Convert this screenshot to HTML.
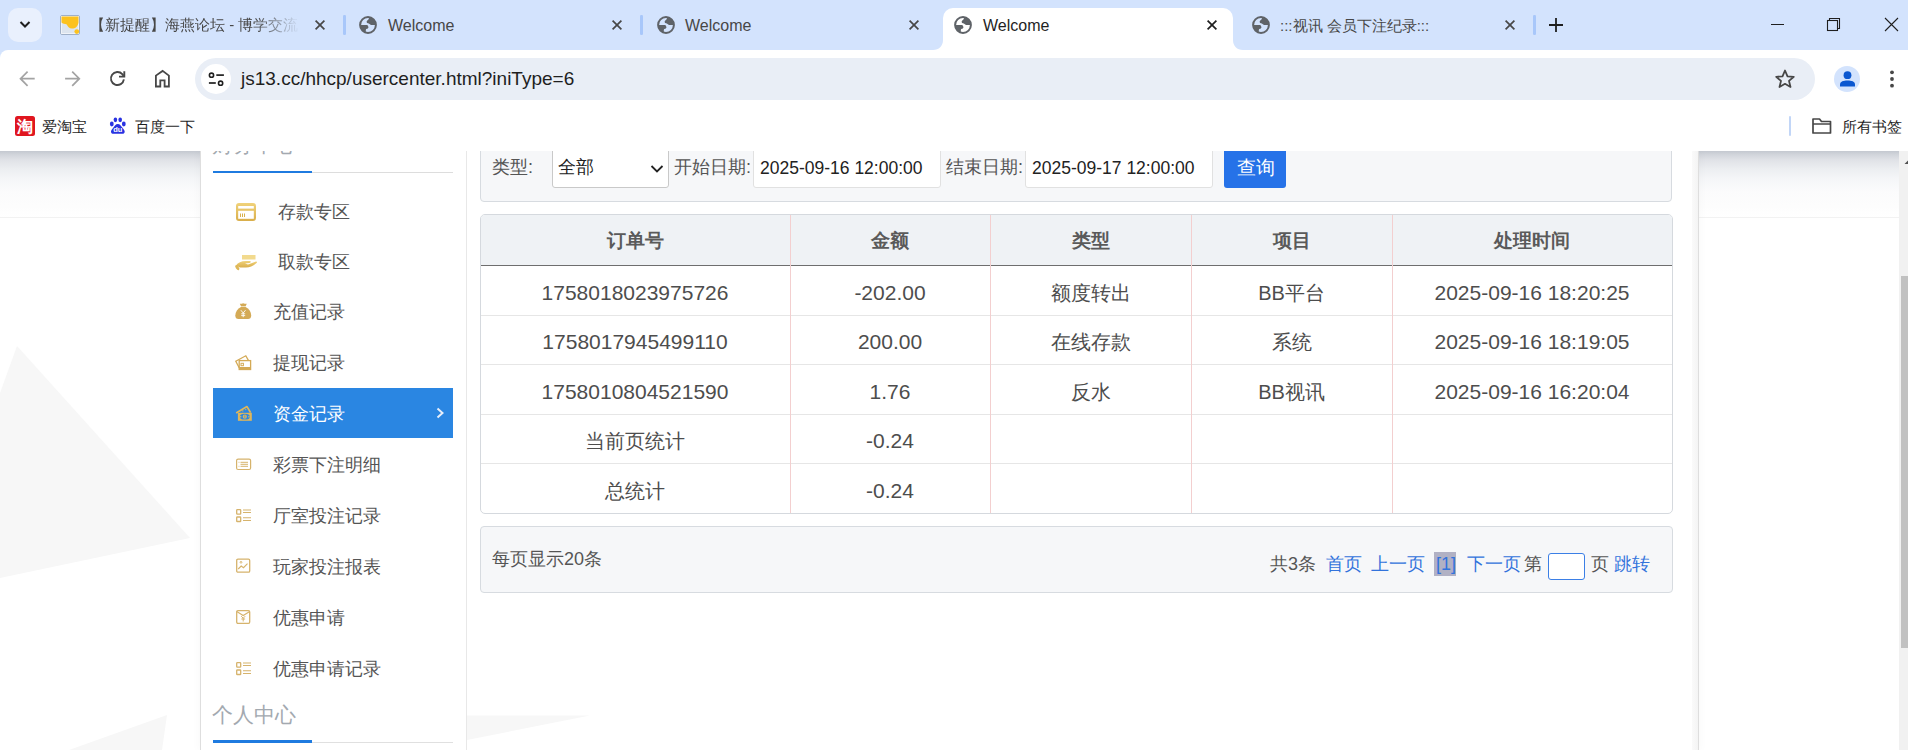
<!DOCTYPE html>
<html><head><meta charset="utf-8">
<style>
*{margin:0;padding:0;box-sizing:border-box}
html,body{width:1908px;height:750px;overflow:hidden;background:#fff;font-family:"Liberation Sans",sans-serif}
.abs{position:absolute}
#tabbar{position:absolute;left:0;top:0;width:1908px;height:58px;background:#d3e3fd}
#toolbar{position:absolute;left:0;top:50px;width:1908px;height:101px;background:#fff;border-top-left-radius:8px}
#page{position:absolute;left:0;top:151px;width:1908px;height:599px;background:#fff;overflow:hidden}
.tabt{position:absolute;top:17px;font-size:15px;color:#474747;white-space:nowrap;line-height:18px}
.sep{position:absolute;top:15px;width:2.5px;height:20px;background:#a8c7fa;border-radius:1.25px}
</style></head><body>
<div id="tabbar"><div class="abs" style="left:8px;top:8px;width:34px;height:34px;border-radius:10px;background:#e9f0fd"></div><svg class="abs" style="left:19px;top:20px" width="12" height="10"><path d="M1.5,2 L6,6.5 L10.5,2" stroke="#1f1f1f" stroke-width="2" fill="none"/></svg><svg class="abs" style="left:60px;top:15px" width="20" height="20"><rect x="0.5" y="0.5" width="19" height="19" rx="1.5" fill="#dde5ef" stroke="#9fb0c8" stroke-width="1"/><rect x="1.5" y="1.5" width="17" height="17" fill="none" stroke="#f4f7fb" stroke-width="0.8"/><path d="M1.5,1.5 L18.5,1.5 L18.5,7.4 C18,11 15.5,13.6 12,13.6 C9,13.6 7.8,11.5 6.8,9.6 C5,9 2.5,8.6 1.5,7.6 Z" fill="#fcc21f"/><circle cx="16.8" cy="16.6" r="2.4" fill="#fcc21f"/></svg><div class="tabt" style="top:16px;left:90px;width:212px;overflow:hidden;-webkit-mask-image:linear-gradient(90deg,#000 165px,transparent 210px)">【新提醒】海燕论坛 - 博学交流</div><svg class="abs" style="left:314px;top:19px" width="12" height="12"><path d="M1.6,1.6 L10.4,10.4 M10.4,1.6 L1.6,10.4" stroke="#474747" stroke-width="1.7"/></svg><div class="sep" style="left:343px"></div><svg class="abs" style="left:359px;top:16px" width="18" height="18" viewBox="0 0 18 18"><defs><clipPath id="gc"><circle cx="9" cy="9" r="8"/></clipPath></defs><circle cx="9" cy="9" r="7.9" fill="none" stroke="#5f6368" stroke-width="2"/><g clip-path="url(#gc)" fill="#5f6368"><path d="M9.8,0 L10,2.1 C9.8,3.5 8.8,4.2 8,4.8 C7.5,5.5 7.6,6.5 8.2,6.9 C9.2,7.3 10.6,7.5 11.2,8.4 C11.6,9 13,9.2 15.6,9.1 L18,8.8 L18,0 Z"/><path d="M0,9.1 L8.2,9.1 C8.9,9.6 9.4,10.6 9.4,11.5 C9.4,12.4 8.6,12.8 7.2,13 C6.8,13.4 6.8,14.5 6.8,15.6 L6.8,18 L0,18 Z"/></g></svg><div class="tabt" style="left:388px;font-size:16px">Welcome</div><svg class="abs" style="left:611px;top:19px" width="12" height="12"><path d="M1.6,1.6 L10.4,10.4 M10.4,1.6 L1.6,10.4" stroke="#474747" stroke-width="1.7"/></svg><div class="sep" style="left:640px"></div><svg class="abs" style="left:657px;top:16px" width="18" height="18" viewBox="0 0 18 18"><defs><clipPath id="gc"><circle cx="9" cy="9" r="8"/></clipPath></defs><circle cx="9" cy="9" r="7.9" fill="none" stroke="#5f6368" stroke-width="2"/><g clip-path="url(#gc)" fill="#5f6368"><path d="M9.8,0 L10,2.1 C9.8,3.5 8.8,4.2 8,4.8 C7.5,5.5 7.6,6.5 8.2,6.9 C9.2,7.3 10.6,7.5 11.2,8.4 C11.6,9 13,9.2 15.6,9.1 L18,8.8 L18,0 Z"/><path d="M0,9.1 L8.2,9.1 C8.9,9.6 9.4,10.6 9.4,11.5 C9.4,12.4 8.6,12.8 7.2,13 C6.8,13.4 6.8,14.5 6.8,15.6 L6.8,18 L0,18 Z"/></g></svg><div class="tabt" style="left:685px;font-size:16px">Welcome</div><svg class="abs" style="left:908px;top:19px" width="12" height="12"><path d="M1.6,1.6 L10.4,10.4 M10.4,1.6 L1.6,10.4" stroke="#474747" stroke-width="1.7"/></svg><div class="abs" style="left:943px;top:8px;width:290px;height:42px;background:#fff;border-radius:10px 10px 0 0"></div><svg class="abs" style="left:933px;top:40px" width="10" height="10"><path d="M0,10 C6,10 10,6 10,0 L10,10 Z" fill="#fff"/></svg><svg class="abs" style="left:1233px;top:40px" width="10" height="10"><path d="M10,10 C4,10 0,6 0,0 L0,10 Z" fill="#fff"/></svg><svg class="abs" style="left:954px;top:16px" width="18" height="18" viewBox="0 0 18 18"><defs><clipPath id="gc"><circle cx="9" cy="9" r="8"/></clipPath></defs><circle cx="9" cy="9" r="7.9" fill="none" stroke="#5f6368" stroke-width="2"/><g clip-path="url(#gc)" fill="#5f6368"><path d="M9.8,0 L10,2.1 C9.8,3.5 8.8,4.2 8,4.8 C7.5,5.5 7.6,6.5 8.2,6.9 C9.2,7.3 10.6,7.5 11.2,8.4 C11.6,9 13,9.2 15.6,9.1 L18,8.8 L18,0 Z"/><path d="M0,9.1 L8.2,9.1 C8.9,9.6 9.4,10.6 9.4,11.5 C9.4,12.4 8.6,12.8 7.2,13 C6.8,13.4 6.8,14.5 6.8,15.6 L6.8,18 L0,18 Z"/></g></svg><div class="tabt" style="left:983px;color:#1f1f1f;font-size:16px">Welcome</div><svg class="abs" style="left:1206px;top:19px" width="12" height="12"><path d="M1.6,1.6 L10.4,10.4 M10.4,1.6 L1.6,10.4" stroke="#1f1f1f" stroke-width="1.7"/></svg><svg class="abs" style="left:1252px;top:16px" width="18" height="18" viewBox="0 0 18 18"><defs><clipPath id="gc"><circle cx="9" cy="9" r="8"/></clipPath></defs><circle cx="9" cy="9" r="7.9" fill="none" stroke="#5f6368" stroke-width="2"/><g clip-path="url(#gc)" fill="#5f6368"><path d="M9.8,0 L10,2.1 C9.8,3.5 8.8,4.2 8,4.8 C7.5,5.5 7.6,6.5 8.2,6.9 C9.2,7.3 10.6,7.5 11.2,8.4 C11.6,9 13,9.2 15.6,9.1 L18,8.8 L18,0 Z"/><path d="M0,9.1 L8.2,9.1 C8.9,9.6 9.4,10.6 9.4,11.5 C9.4,12.4 8.6,12.8 7.2,13 C6.8,13.4 6.8,14.5 6.8,15.6 L6.8,18 L0,18 Z"/></g></svg><div class="tabt" style="left:1280px">:::视讯 会员下注纪录:::</div><svg class="abs" style="left:1504px;top:19px" width="12" height="12"><path d="M1.6,1.6 L10.4,10.4 M10.4,1.6 L1.6,10.4" stroke="#474747" stroke-width="1.7"/></svg><div class="sep" style="left:1533px"></div><svg class="abs" style="left:1548px;top:17px" width="16" height="16"><path d="M8,1 L8,15 M1,8 L15,8" stroke="#1f1f1f" stroke-width="1.8"/></svg><div class="abs" style="left:1771px;top:24px;width:13px;height:1px;background:#1f1f1f"></div><svg class="abs" style="left:1825px;top:16px" width="17" height="17"><rect x="2.5" y="4.5" width="10" height="10" fill="none" stroke="#1f1f1f" stroke-width="1.1"/><path d="M4.5,4.5 L4.5,2.5 L14.5,2.5 L14.5,12.5 L12.5,12.5" fill="none" stroke="#1f1f1f" stroke-width="1.1"/></svg><svg class="abs" style="left:1884px;top:17px" width="15" height="15"><path d="M1,1 L14,14 M14,1 L1,14" stroke="#1f1f1f" stroke-width="1.1"/></svg></div>
<div id="toolbar"><svg class="abs" style="left:17px;top:19px" width="20" height="20"><path d="M17.7,9.7 L3.6,9.7 M10.6,2.6 L3.5,9.7 L10.6,16.8" stroke="#a3a3a3" stroke-width="1.7" fill="none"/></svg><svg class="abs" style="left:62px;top:19px" width="20" height="20"><path d="M3.1,9.7 L17.2,9.7 M10.2,2.6 L17.3,9.7 L10.2,16.8" stroke="#a3a3a3" stroke-width="1.7" fill="none"/></svg><svg class="abs" style="left:107px;top:19px" width="20" height="20"><path d="M16.89,10.40 A6.5,6.5 0 1 1 15.28,5.15 L16.6,6.9" stroke="#474747" stroke-width="1.9" fill="none"/><path d="M12,7.6 L17.3,7.6 L17.3,2.2" stroke="#474747" stroke-width="1.9" fill="none"/></svg><svg class="abs" style="left:152px;top:19px" width="20" height="20"><path d="M3.9,17.5 L3.9,6.6 L10.6,1.9 L16.9,6.6 L16.9,17.5 L12.6,17.5 L12.6,11.4 L8.3,11.4 L8.3,17.5 Z" stroke="#474747" stroke-width="1.8" fill="none" stroke-linejoin="miter"/></svg><div class="abs" style="left:195px;top:8px;width:1620px;height:42px;border-radius:21px;background:#e9eef6"></div><div class="abs" style="left:201px;top:14px;width:30px;height:30px;border-radius:15px;background:#fff"></div><svg class="abs" style="left:207px;top:20px" width="20" height="18"><circle cx="4.5" cy="5.2" r="2.1" fill="none" stroke="#1f1f1f" stroke-width="1.6"/><path d="M9.3,5.1 L16.9,5.1" stroke="#1f1f1f" stroke-width="1.7"/><path d="M1.9,13 L8.8,13" stroke="#1f1f1f" stroke-width="1.7"/><circle cx="13.6" cy="13.2" r="2.1" fill="none" stroke="#1f1f1f" stroke-width="1.6"/></svg><div class="abs" style="left:241px;top:17px;font-size:19px;color:#1f1f1f;line-height:24px;white-space:nowrap">js13.cc/hhcp/usercenter.html?iniType=6</div><svg class="abs" style="left:1774px;top:18px" width="22" height="22"><path d="M11,2.5 L13.5,8.3 L19.8,8.8 L15,12.9 L16.5,19 L11,15.8 L5.5,19 L7,12.9 L2.2,8.8 L8.5,8.3 Z" fill="none" stroke="#474747" stroke-width="1.8" stroke-linejoin="round"/></svg><div class="abs" style="left:1834px;top:16px;width:26px;height:26px;border-radius:13px;background:#d3e3fd"></div><svg class="abs" style="left:1837px;top:19px" width="20" height="20"><circle cx="10.5" cy="6.2" r="3.9" fill="#0b57d0"/><path d="M3,17.5 L3,15.5 C3,12.6 6.5,11.6 10.5,11.6 C14.5,11.6 18,12.6 18,15.5 L18,17.5 Z" fill="#0b57d0"/></svg><svg class="abs" style="left:1887px;top:19px" width="10" height="20"><circle cx="5" cy="3.3" r="1.9" fill="#474747"/><circle cx="5" cy="10" r="1.9" fill="#474747"/><circle cx="5" cy="16.7" r="1.9" fill="#474747"/></svg><svg class="abs" style="left:15px;top:66px" width="20" height="20"><rect x="0" y="0" width="20" height="20" rx="2.5" fill="#e0161f"/><text x="10" y="16" font-size="16" text-anchor="middle" fill="#fff" font-weight="bold">淘</text></svg><div class="abs" style="left:42px;top:67px;font-size:15px;color:#1f1f1f;line-height:20px">爱淘宝</div><svg class="abs" style="left:106px;top:65px" width="22" height="22"><g fill="#2932e1"><ellipse cx="5.8" cy="9" rx="1.9" ry="2.4"/><ellipse cx="9.4" cy="4.8" rx="1.8" ry="2.4"/><ellipse cx="14.2" cy="4.8" rx="1.8" ry="2.4"/><ellipse cx="17.8" cy="9" rx="1.9" ry="2.4"/><path d="M11.8,9 C9.6,9 8.6,11 7.2,12.8 C5.8,14.6 4.9,15.6 5,17 C5.2,18.6 6.6,19 8.2,18.8 L15.4,18.8 C17,19 18.5,18.6 18.7,17 C18.8,15.6 17.9,14.6 16.5,12.8 C15,11 14,9 11.8,9 Z"/></g><text x="11.8" y="17.4" font-size="7.5" text-anchor="middle" fill="#fff" font-weight="bold" font-family="Liberation Sans">du</text></svg><div class="abs" style="left:135px;top:67px;font-size:15px;color:#1f1f1f;line-height:20px">百度一下</div><div class="abs" style="left:1789px;top:66px;width:2px;height:20px;background:#c2d6f7;border-radius:1px"></div><svg class="abs" style="left:1811px;top:66px" width="22" height="20"><path d="M2,3 L8.5,3 L10.5,5.5 L19.5,5.5 L19.5,17 L2,17 Z" fill="none" stroke="#474747" stroke-width="1.7" stroke-linejoin="round"/><path d="M2,8 L19.5,8" stroke="#474747" stroke-width="1.5"/></svg><div class="abs" style="left:1842px;top:67px;font-size:15px;color:#1f1f1f;line-height:20px;white-space:nowrap">所有书签</div></div>
<div id="page">
<svg class="abs" style="left:0;top:0" width="1908" height="599">
 <polygon points="17,195 190,387 0,427 0,242" fill="#f7f7f7"/>
 <polygon points="167,564 162,599 69,599" fill="#f7f7f7"/>
</svg>
<div class="abs" style="left:0;top:0;width:1899px;height:67px;background:linear-gradient(#c4c8d0 0px,#d3d6dc 4px,#e0e2e7 9px,#eceef1 18px,#f5f6f8 28px,#fbfbfc 40px,#fdfdfd 55px,#fff 67px);border-bottom:1px solid #f2f2f2"></div>
<div class="abs" style="left:200px;top:0;width:1499px;height:600px;background:#fff;border-left:1px solid #dedede;border-right:1px solid #dedede;box-shadow:0 0 10px rgba(0,0,0,0.035)"></div><div class="abs" style="left:1692px;top:0;width:6px;height:600px;background:linear-gradient(90deg,#fafafa,#f4f4f4)"></div>
<div class="abs" style="left:466px;top:0;width:1px;height:600px;background:#e8e8e8"></div><svg class="abs" style="left:0;top:0" width="700" height="599"><polygon points="467,564.5 590,564.5 467,589" fill="#f7f7f7"/></svg>
<!-- sidebar -->
<div class="abs" style="left:212px;top:-19px;font-size:21px;color:#a3a9b0;line-height:26px">财务中心</div>
<div class="abs" style="left:213px;top:21px;width:240px;height:1px;background:#ddd"></div>
<div class="abs" style="left:213px;top:20px;width:99px;height:2px;background:#1f7be0"></div>
<div class="abs" style="left:278px;top:49px;font-size:18px;color:#555;line-height:24px;white-space:nowrap">存款专区</div><div class="abs" style="left:278px;top:99px;font-size:18px;color:#555;line-height:24px;white-space:nowrap">取款专区</div><div class="abs" style="left:273px;top:149px;font-size:18px;color:#555;line-height:24px;white-space:nowrap">充值记录</div><div class="abs" style="left:273px;top:200px;font-size:18px;color:#555;line-height:24px;white-space:nowrap">提现记录</div><div class="abs" style="left:213px;top:237px;width:240px;height:50px;background:#2a86e2"></div><svg class="abs" style="left:436px;top:256px" width="9" height="12"><path d="M1.5,1.5 L6.5,6 L1.5,10.5" stroke="#e6eefa" stroke-width="2" fill="none"/></svg><div class="abs" style="left:273px;top:251px;font-size:18px;color:#fff;line-height:24px;white-space:nowrap">资金记录</div><div class="abs" style="left:273px;top:302px;font-size:18px;color:#555;line-height:24px;white-space:nowrap">彩票下注明细</div><div class="abs" style="left:273px;top:353px;font-size:18px;color:#555;line-height:24px;white-space:nowrap">厅室投注记录</div><div class="abs" style="left:273px;top:404px;font-size:18px;color:#555;line-height:24px;white-space:nowrap">玩家投注报表</div><div class="abs" style="left:273px;top:455px;font-size:18px;color:#555;line-height:24px;white-space:nowrap">优惠申请</div><div class="abs" style="left:273px;top:506px;font-size:18px;color:#555;line-height:24px;white-space:nowrap">优惠申请记录</div>
<div class="abs" style="left:212px;top:551px;font-size:21px;color:#a3a9b0;line-height:26px">个人中心</div>
<div class="abs" style="left:213px;top:591px;width:240px;height:1px;background:#e0e0e0"></div>
<div class="abs" style="left:213px;top:589px;width:99px;height:3px;background:#1f7be0"></div>

<svg class="abs" style="left:0;top:0;overflow:visible" width="300" height="600">
<defs><linearGradient id="gg" x1="0" y1="0" x2="0" y2="1"><stop offset="0" stop-color="#f0d27a"/><stop offset="1" stop-color="#d9ae4a"/></linearGradient></defs>
<!-- card -->
<g transform="translate(236,52)">
 <rect x="0" y="0" width="20" height="18" rx="3" fill="url(#gg)"/>
 <rect x="2.2" y="3" width="15.6" height="2.6" fill="#fff"/>
 <rect x="2.2" y="7.8" width="15.6" height="8" fill="#fff"/>
 <rect x="4" y="10.5" width="1" height="3.5" fill="#d9b04c"/><rect x="6" y="10.5" width="1" height="3.5" fill="#d9b04c"/><rect x="8" y="10.5" width="1" height="3.5" fill="#d9b04c"/>
</g>
<!-- hand -->
<g transform="translate(235,103)">
 <rect x="7" y="1" width="13.5" height="4.5" fill="#f2da8e"/>
 <path d="M1,11.5 C3,8.5 6,7 11,7 L15,7 C16,7 16,9 14.5,9 L10,9.5 L13,10.5 L21,7.5 C22,7.3 22.3,8.3 21.5,9 C18,12 15,13.5 11,13.5 L5,13.5 Z" fill="url(#gg)"/>
 <ellipse cx="2.3" cy="13.6" rx="1.5" ry="2.9" transform="rotate(-35 2.3 13.6)" fill="#deb858"/>
</g>
<!-- money bag -->
<g transform="translate(235,152)">
 <path d="M4.8,0.8 C6,0.4 7,1 8.2,0.3 C9.4,1 10.6,0.4 11.8,0.8 L10.6,3.2 L6,3.2 Z" fill="#d4aa56"/><rect x="6" y="3.2" width="4.6" height="0.8" fill="#efdcae"/>
 <path d="M6,4 L10.6,4 C14,5.8 16.2,9 16.2,12.5 C16.2,15 15,16 13,16 L3.5,16 C1.5,16 0.3,15 0.3,12.5 C0.3,9 2.6,5.8 6,4 Z" fill="#d4aa56"/>
 <path d="M5.9,7.2 L8.2,10 L10.5,7.2 M8.2,10 L8.2,14.2 M6.2,10.8 L10.2,10.8 M6.2,12.6 L10.2,12.6" stroke="#fff" stroke-width="0.9" fill="none"/>
</g>
<!-- cards -->
<g transform="translate(235,204)" fill="none" stroke="#d4aa56" stroke-width="1.3">
 <path d="M4.3,13 L0.8,6.2 L10.8,0.8 L13.4,5.4"/>
 <rect x="4.2" y="5.6" width="11.4" height="8.9"/>
 <rect x="6" y="8.3" width="2.4" height="2.4" stroke-width="1"/>
 <rect x="4.2" y="12" width="11.4" height="2.5" fill="#d4aa56" stroke="none"/>
</g>
<!-- money -->
<g transform="translate(235,254)">
 <path d="M1.2,8 L12,1.6 L15.6,7.6" fill="none" stroke="#deb65a" stroke-width="1.8" stroke-linejoin="round"/>
 <circle cx="7.8" cy="5.9" r="0.7" fill="#deb65a"/><circle cx="10.8" cy="4.6" r="0.7" fill="#deb65a"/>
 <rect x="2.9" y="7.8" width="13.9" height="8" fill="#deb65a"/>
 <ellipse cx="9.8" cy="11.7" rx="5" ry="2.9" fill="#2a86e2"/>
 <circle cx="9.8" cy="11.7" r="2.1" fill="#deb65a"/>
 <path d="M9.8,10.2 L9.8,13.2" stroke="#2a86e2" stroke-width="0.6"/>
 <circle cx="5.7" cy="11.7" r="0.8" fill="#deb65a"/><circle cx="13.9" cy="11.7" r="0.8" fill="#deb65a"/>
</g>
<!-- list card -->
<g transform="translate(236,307.5)" fill="none" stroke="#d6b36c" stroke-width="1.2">
 <rect x="0.6" y="0.6" width="14" height="10.4" rx="1.5"/>
 <path d="M4.5,3.8 L12,3.8 M4.5,5.8 L12,5.8 M4.5,7.8 L12,7.8" stroke-width="1"/>
 <path d="M2.6,3.8 L3.4,3.8 M2.6,7.8 L3.4,7.8" stroke-width="1"/>
</g>
<g transform="translate(236,358)" fill="none" stroke="#d6b36c" stroke-width="1.3">
 <rect x="0.7" y="0.7" width="4" height="4.5" rx="0.6"/><rect x="0.7" y="8" width="4" height="4.5" rx="0.6"/>
 <path d="M7,1 L15,1 M7,3.5 L15,3.5 M7,8.7 L15,8.7 M7,11.5 L15,11.5" stroke-width="1.1"/>
</g>
<g transform="translate(236,511)" fill="none" stroke="#d6b36c" stroke-width="1.3">
 <rect x="0.7" y="0.7" width="4" height="4.5" rx="0.6"/><rect x="0.7" y="8" width="4" height="4.5" rx="0.6"/>
 <path d="M7,1 L15,1 M7,3.5 L15,3.5 M7,8.7 L15,8.7 M7,11.5 L15,11.5" stroke-width="1.1"/>
</g>

<!-- chart -->
<g transform="translate(236,407.5)" fill="none" stroke="#d6b36c" stroke-width="1.3">
 <rect x="0.7" y="0.7" width="13" height="13" rx="1.2"/>
 <path d="M2.2,10.5 L5.2,7.5 L7.5,9.2 L11.5,5.2" stroke-width="1.1"/>
 <circle cx="5" cy="3.8" r="0.9" stroke-width="0.9"/>
</g>
<!-- envelope -->
<g transform="translate(236,459)" fill="none" stroke="#d6b36c" stroke-width="1.3">
 <rect x="0.7" y="0.7" width="13" height="12.6" rx="1.2"/>
 <path d="M0.7,1.5 L7.2,5.5 L13.7,1.5" stroke-width="1.1"/>
 <path d="M5.2,6.2 L7.2,8.2 L9.2,6.2 M7.2,8.2 L7.2,11.5 M5.3,9 L9.1,9" stroke-width="1"/>
</g>
</svg>
<!-- filter panel -->
<div class="abs" style="left:480px;top:-10px;width:1192px;height:61px;background:#f6f7f9;border:1px solid #d7dbe0;border-radius:4px"></div>
<div class="abs" style="left:492px;top:4px;font-size:18px;color:#555;line-height:24px">类型:</div>
<div class="abs" style="left:552px;top:-10px;width:117px;height:47px;background:#fff;border:1px solid #c9c9c9;border-radius:3px"></div>
<div class="abs" style="left:558px;top:4px;font-size:18px;color:#222;line-height:24px">全部</div><svg class="abs" style="left:650px;top:13px" width="14" height="10"><path d="M1.5,2 L7,7.5 L12.5,2" stroke="#222" stroke-width="1.8" fill="none"/></svg>
<div class="abs" style="left:674px;top:4px;font-size:18px;color:#555;line-height:24px">开始日期:</div>
<div class="abs" style="left:753px;top:-10px;width:188px;height:47px;background:#fff;border:1px solid #e1e1e1;border-radius:3px"></div>
<div class="abs" style="left:760px;top:6px;font-size:17.5px;color:#222;line-height:22px">2025-09-16 12:00:00</div>
<div class="abs" style="left:946px;top:4px;font-size:18px;color:#555;line-height:24px">结束日期:</div>
<div class="abs" style="left:1025px;top:-10px;width:188px;height:47px;background:#fff;border:1px solid #e1e1e1;border-radius:3px"></div>
<div class="abs" style="left:1032px;top:6px;font-size:17.5px;color:#222;line-height:22px">2025-09-17 12:00:00</div>
<div class="abs" style="left:1224px;top:-10px;width:62px;height:47px;background:#2672e8;border-radius:3px"></div>
<div class="abs" style="left:1237px;top:5px;font-size:19px;color:#fff;line-height:24px">查询</div>
<!-- table -->
<div class="abs" style="left:480px;top:63px;width:1193px;height:300px;background:#fff;border:1px solid #d5d9de;border-radius:5px;overflow:hidden"><div class="abs" style="left:0;top:0;width:1193px;height:51px;background:#eff2f5;border-bottom:1px solid #6e6e6e"></div><div class="abs" style="left:0;top:100px;width:1193px;height:1px;background:#e6e6e6"></div><div class="abs" style="left:0;top:149px;width:1193px;height:1px;background:#e6e6e6"></div><div class="abs" style="left:0;top:199px;width:1193px;height:1px;background:#e6e6e6"></div><div class="abs" style="left:0;top:248px;width:1193px;height:1px;background:#e6e6e6"></div><div class="abs" style="left:309px;top:0;width:1px;height:300px;background:#f3cfcf"></div><div class="abs" style="left:509px;top:0;width:1px;height:300px;background:#f3cfcf"></div><div class="abs" style="left:710px;top:0;width:1px;height:300px;background:#f3cfcf"></div><div class="abs" style="left:911px;top:0;width:1px;height:300px;background:#f3cfcf"></div><div class="abs" style="left:1191px;top:0;width:1px;height:300px;background:#f3cfcf"></div></div><div class="abs" style="left:480px;top:76px;width:310px;text-align:center;font-size:19px;font-weight:bold;color:#5a5a5a;line-height:28px">订单号</div><div class="abs" style="left:790px;top:76px;width:200px;text-align:center;font-size:19px;font-weight:bold;color:#5a5a5a;line-height:28px">金额</div><div class="abs" style="left:990px;top:76px;width:201px;text-align:center;font-size:19px;font-weight:bold;color:#5a5a5a;line-height:28px">类型</div><div class="abs" style="left:1191px;top:76px;width:201px;text-align:center;font-size:19px;font-weight:bold;color:#5a5a5a;line-height:28px">项目</div><div class="abs" style="left:1392px;top:76px;width:280px;text-align:center;font-size:19px;font-weight:bold;color:#5a5a5a;line-height:28px">处理时间</div><div class="abs" style="left:480px;top:128px;width:310px;text-align:center;font-size:21px;color:#4d4d4d;line-height:28px">1758018023975726</div><div class="abs" style="left:790px;top:128px;width:200px;text-align:center;font-size:21px;color:#4d4d4d;line-height:28px">-202.00</div><div class="abs" style="left:990px;top:128px;width:201px;text-align:center;font-size:20px;color:#4d4d4d;line-height:28px">额度转出</div><div class="abs" style="left:1191px;top:128px;width:201px;text-align:center;font-size:20px;color:#4d4d4d;line-height:28px">BB平台</div><div class="abs" style="left:1392px;top:128px;width:280px;text-align:center;font-size:21px;color:#4d4d4d;line-height:28px">2025-09-16 18:20:25</div><div class="abs" style="left:480px;top:177px;width:310px;text-align:center;font-size:21px;color:#4d4d4d;line-height:28px">1758017945499110</div><div class="abs" style="left:790px;top:177px;width:200px;text-align:center;font-size:21px;color:#4d4d4d;line-height:28px">200.00</div><div class="abs" style="left:990px;top:177px;width:201px;text-align:center;font-size:20px;color:#4d4d4d;line-height:28px">在线存款</div><div class="abs" style="left:1191px;top:177px;width:201px;text-align:center;font-size:20px;color:#4d4d4d;line-height:28px">系统</div><div class="abs" style="left:1392px;top:177px;width:280px;text-align:center;font-size:21px;color:#4d4d4d;line-height:28px">2025-09-16 18:19:05</div><div class="abs" style="left:480px;top:227px;width:310px;text-align:center;font-size:21px;color:#4d4d4d;line-height:28px">1758010804521590</div><div class="abs" style="left:790px;top:227px;width:200px;text-align:center;font-size:21px;color:#4d4d4d;line-height:28px">1.76</div><div class="abs" style="left:990px;top:227px;width:201px;text-align:center;font-size:20px;color:#4d4d4d;line-height:28px">反水</div><div class="abs" style="left:1191px;top:227px;width:201px;text-align:center;font-size:20px;color:#4d4d4d;line-height:28px">BB视讯</div><div class="abs" style="left:1392px;top:227px;width:280px;text-align:center;font-size:21px;color:#4d4d4d;line-height:28px">2025-09-16 16:20:04</div><div class="abs" style="left:480px;top:276px;width:310px;text-align:center;font-size:20px;color:#4d4d4d;line-height:28px">当前页统计</div><div class="abs" style="left:790px;top:276px;width:200px;text-align:center;font-size:21px;color:#4d4d4d;line-height:28px">-0.24</div><div class="abs" style="left:480px;top:326px;width:310px;text-align:center;font-size:20px;color:#4d4d4d;line-height:28px">总统计</div><div class="abs" style="left:790px;top:326px;width:200px;text-align:center;font-size:21px;color:#4d4d4d;line-height:28px">-0.24</div>
<!-- pager -->
<div class="abs" style="left:480px;top:375px;width:1193px;height:67px;background:#f6f7f9;border:1px solid #d7dbe0;border-radius:4px"></div>
<div class="abs" style="left:492px;top:396px;font-size:18px;color:#555;line-height:24px">每页显示20条</div>

<div class="abs" style="left:1270px;top:401px;font-size:18px;color:#555;line-height:24px">共3条</div>
<div class="abs" style="left:1326px;top:401px;font-size:18px;color:#3273dc;line-height:24px">首页</div>
<div class="abs" style="left:1371px;top:401px;font-size:18px;color:#3273dc;line-height:24px">上一页</div>
<div class="abs" style="left:1434px;top:401px;width:22px;height:24px;background:#b1b1c4"></div>
<div class="abs" style="left:1436px;top:401px;font-size:18px;color:#3273dc;line-height:24px">[1]</div>
<div class="abs" style="left:1467px;top:401px;font-size:18px;color:#3273dc;line-height:24px">下一页</div>
<div class="abs" style="left:1524px;top:401px;font-size:18px;color:#555;line-height:24px">第</div>
<div class="abs" style="left:1548px;top:402px;width:37px;height:27px;background:#fff;border:1px solid #3b7fe6;border-radius:3px"></div>
<div class="abs" style="left:1591px;top:401px;font-size:18px;color:#555;line-height:24px">页</div>
<div class="abs" style="left:1614px;top:401px;font-size:18px;color:#3273dc;line-height:24px">跳转</div>
<!-- scrollbar -->
<div class="abs" style="left:1899px;top:0;width:9px;height:599px;background:#f1f1f1"></div>
<div class="abs" style="left:1901px;top:125px;width:7px;height:372px;background:#c1c1c1"></div><svg class="abs" style="left:1900px;top:8px" width="8" height="8"><polygon points="4.5,5 8.5,1 12.5,5" fill="#505050"/></svg>
</div>
</body></html>
